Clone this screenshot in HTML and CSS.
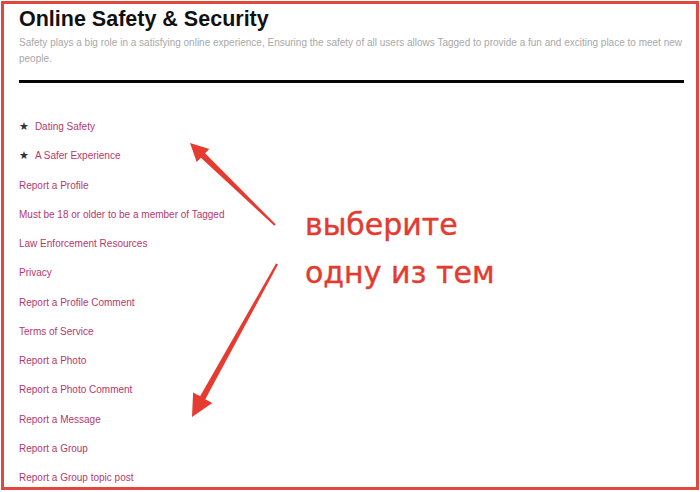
FILE: index.html
```html
<!DOCTYPE html>
<html lang="en">
<head>
<meta charset="utf-8">
<title>Online Safety &amp; Security</title>
<link rel="stylesheet" href="styles.css">
</head>
<body>
<div class="frame">
  <div class="page">
    <h1 class="title">Online Safety &amp; Security</h1>
    <p class="lead">Safety plays a big role in a satisfying online experience, Ensuring the safety of all users allows Tagged to provide a fun and exciting place to meet new people.</p>
    <hr class="rule">
    <ul class="topics">
      <li class="topic starred"><span class="star">★</span><a href="#">Dating Safety</a></li>
      <li class="topic starred"><span class="star">★</span><a href="#">A Safer Experience</a></li>
      <li class="topic"><a href="#">Report a Profile</a></li>
      <li class="topic"><a href="#">Must be 18 or older to be a member of Tagged</a></li>
      <li class="topic"><a href="#">Law Enforcement Resources</a></li>
      <li class="topic"><a href="#">Privacy</a></li>
      <li class="topic"><a href="#">Report a Profile Comment</a></li>
      <li class="topic"><a href="#">Terms of Service</a></li>
      <li class="topic"><a href="#">Report a Photo</a></li>
      <li class="topic"><a href="#">Report a Photo Comment</a></li>
      <li class="topic"><a href="#">Report a Message</a></li>
      <li class="topic"><a href="#">Report a Group</a></li>
      <li class="topic"><a href="#">Report a Group topic post</a></li>
    </ul>
  </div>
  <svg class="arrows" width="700" height="492" viewBox="0 0 700 492" aria-hidden="true">
    <polygon class="arrow" points="190,143 209.3,149 205.1,153.3 275.7,224.3 274.3,225.7 200.9,157.7 196.7,162"/>
    <polygon class="arrow" points="192,417 212.3,403.1 205.3,399.3 278,264.6 276,263.4 200.1,396.3 193.1,392.5"/>
  </svg>
  <div class="note">выберите<br>одну из тем</div>
</div>
</body>
</html>
```

FILE: styles.css
```css
* { box-sizing: border-box; }
html, body {
  margin: 0;
  padding: 0;
  background: #fff;
}
.frame {
  position: relative;
  width: 698px;
  height: 489px;
  margin: 1px;
  border: 3px solid #e3463d;
  overflow: hidden;
  font-family: "Liberation Sans", Arial, sans-serif;
}
.page {
  padding: 2px 12px 0 15px;
}
.title {
  margin: 0;
  font-size: 21.5px;
  line-height: 26px;
  font-weight: bold;
  color: #111;
}
.lead {
  margin: 3px -8px 0 0;
  font-size: 10px;
  line-height: 16px;
  color: #a8a8a8;
}
.rule {
  margin: 13px 0 0;
  border: 0;
  height: 3px;
  background: #050505;
}
.topics {
  list-style: none;
  margin: 0;
  padding: 29px 0 0;
}
.topic {
  height: 29.25px;
  line-height: 29.25px;
  font-size: 10px;
  display: flex;
  align-items: center;
  gap: 6px;
}
.topic a {
  color: #b5386d;
  text-decoration: none;
}
.star {
  font-family: "DejaVu Sans", sans-serif;
  font-size: 11px;
  color: #333;
}
.arrows {
  position: absolute;
  left: -4px;
  top: -4px;
  pointer-events: none;
}
.arrow {
  fill: #e53b30;
}
.note {
  position: absolute;
  left: 301px;
  top: 197px;
  font-family: "DejaVu Sans", sans-serif;
  font-size: 30px;
  line-height: 48px;
  color: #e33b30;
  -webkit-text-stroke: 0.4px #e33b30;
}
```
